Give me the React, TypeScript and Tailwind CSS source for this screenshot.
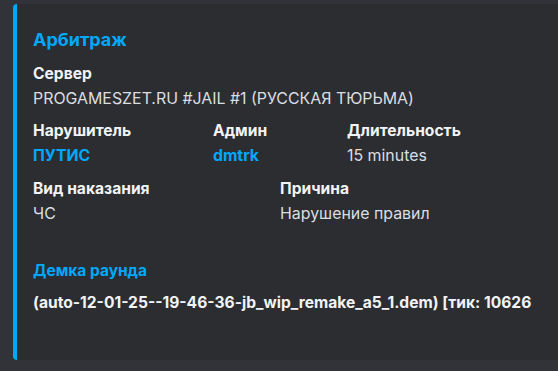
export default function App() {
  return (
    <div
      className="h-[371px] w-[558px] overflow-hidden bg-[#313338] pt-[4px] pl-[13px]"
      style={{ fontFamily: 'Inter, "Noto Sans", sans-serif' }}
    >
      <div className="flex h-[356px] w-[560px] rounded-l-[4px] bg-[#2b2d31]">
        <div className="w-[4px] shrink-0 rounded-l-[4px] bg-[#00a8fc]" />
        <div className="flex flex-col pl-[16px] pt-[24px]">
          <div className="text-[18px] font-bold leading-[24px] text-[#00a8fc]">
            Арбитраж
          </div>

          <Field className="mt-[11px]" label="Сервер" value="PROGAMESZET.RU #JAIL #1 (РУССКАЯ ТЮРЬМА)" />

          <div className="mt-[10px] flex">
            <Field className="w-[180px]" label="Нарушитель" value="ПУТИС" link />
            <Field className="w-[134px]" label="Админ" value="dmtrk" link />
            <Field label="Длительность" value="15 minutes" />
          </div>

          <div className="mt-[11px] flex">
            <Field className="w-[247px]" label="Вид наказания" value="ЧС" />
            <Field label="Причина" value="Нарушение правил" />
          </div>

          <div className="mt-[35px] text-[15.5px] font-bold leading-[22px] text-[#00a8fc]">
            Демка раунда
          </div>
          <div className="mt-[10px] whitespace-nowrap text-[15.6px] font-bold leading-[22px] text-[#f2f3f5]">
            (auto-12-01-25--19-46-36-jb_wip_remake_a5_1.dem) [тик: 10626
          </div>
        </div>
      </div>
    </div>
  );
}

function Field({
  label,
  value,
  link,
  className = "",
}: {
  label: string;
  value: string;
  link?: boolean;
  className?: string;
}) {
  return (
    <div className={"flex flex-col gap-[3px] " + className}>
      <div className="whitespace-nowrap text-[15.6px] font-bold leading-[22px] text-[#f2f3f5]">
        {label}
      </div>
      <div
        className={
          link
            ? "whitespace-nowrap text-[15.8px] font-bold leading-[22px] text-[#00a8fc]"
            : "whitespace-nowrap text-[15.9px] leading-[22px] text-[#dbdee1]"
        }
      >
        {value}
      </div>
    </div>
  );
}
